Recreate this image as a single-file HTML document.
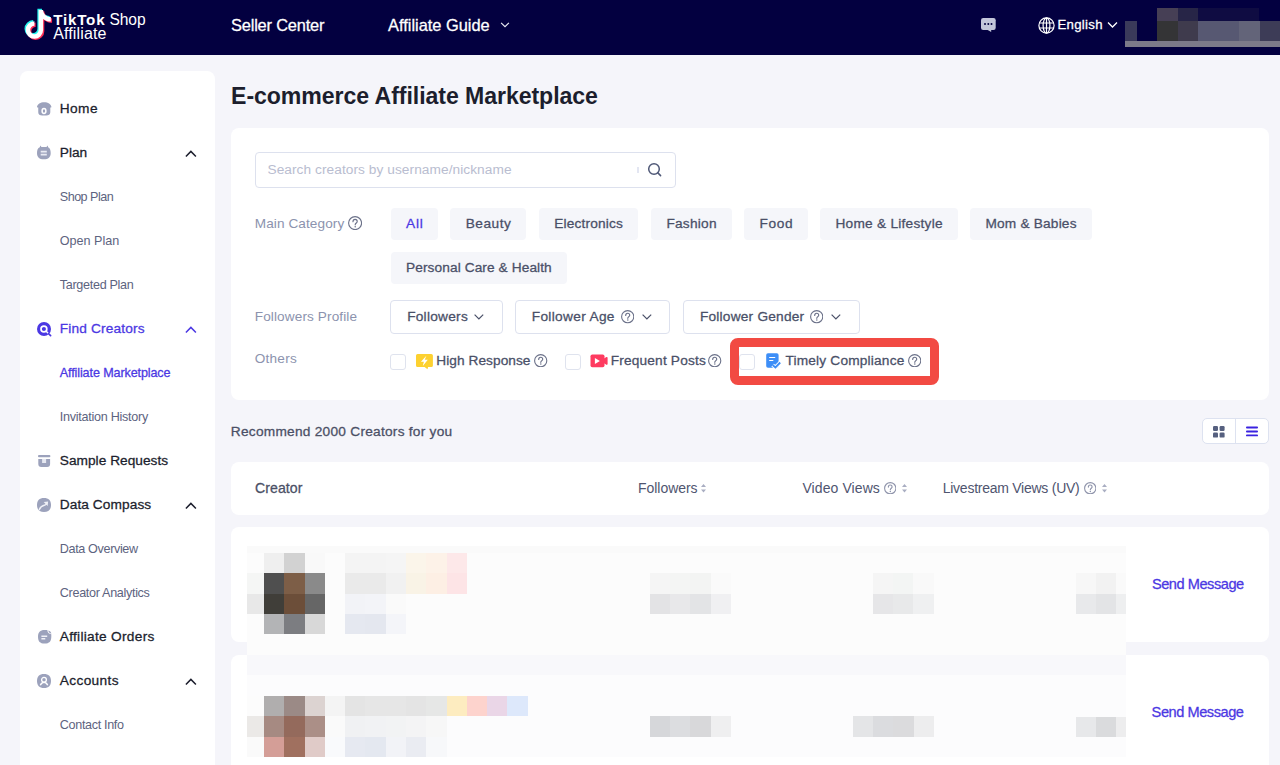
<!DOCTYPE html>
<html><head><meta charset="utf-8">
<style>
*{box-sizing:border-box;margin:0;padding:0}
html,body{width:1280px;height:765px;overflow:hidden;background:#f5f5fa;font-family:"Liberation Sans",sans-serif}
.t{position:absolute;white-space:nowrap;line-height:1}
.a{position:absolute}
.hdr{position:absolute;left:0;top:0;width:1280px;height:55px;background:#030040}
.card{position:absolute;background:#fff;border-radius:8px}
.chip{position:absolute;height:32px;background:#f5f6fa;border-radius:4px}
.dd{position:absolute;height:33px;border:1px solid #dde1ee;border-radius:4px;background:#fff}
.cb{position:absolute;width:16px;height:16px;border:1px solid #dfe3ee;border-radius:3px;background:#fff}
.m{position:absolute}
</style></head><body>
<div class="hdr"></div>
<!-- logo -->
<svg class="a" style="left:22px;top:7px" width="32" height="34" viewBox="0 0 32 34">
<g transform="translate(2.5,1.8) scale(0.645)"><path fill="#25f4ee" d="M20 0H27C27 5.5 32 11 39 11V18C34.5 18 30 16.5 27 14V31A13.5 13.5 0 1 1 13.5 17.5V24.5A6.5 6.5 0 1 0 20 31Z"/></g>
<g transform="translate(4.9,4.2) scale(0.645)"><path fill="#fe2c55" d="M20 0H27C27 5.5 32 11 39 11V18C34.5 18 30 16.5 27 14V31A13.5 13.5 0 1 1 13.5 17.5V24.5A6.5 6.5 0 1 0 20 31Z"/></g>
<g transform="translate(3.7,3.0) scale(0.645)"><path fill="#fff" d="M20 0H27C27 5.5 32 11 39 11V18C34.5 18 30 16.5 27 14V31A13.5 13.5 0 1 1 13.5 17.5V24.5A6.5 6.5 0 1 0 20 31Z"/></g>
</svg>
<!-- header chevron affiliate guide -->
<svg class="a" style="left:500px;top:21px" width="10" height="7" viewBox="0 0 10 7"><path d="M1.1 1.9L5 5.6l3.9-3.7" fill="none" stroke="#e9eaf2" stroke-width="1.2"/></svg>
<!-- chat icon -->
<svg class="a" style="left:981.4px;top:18px" width="15" height="15" viewBox="0 0 15 15"><rect x="0" y="0" width="14.7" height="12" rx="2.2" fill="#c3c6da"/><path fill="#c3c6da" d="M6.2 11.8l4 2.3v-2.3z"/><circle cx="4" cy="6.1" r="1" fill="#030040"/><circle cx="7.3" cy="6.1" r="1" fill="#030040"/><circle cx="10.5" cy="6.1" r="1" fill="#030040"/></svg>
<!-- globe -->
<svg class="a" style="left:1038px;top:16.5px" width="17" height="17" viewBox="0 0 17 17"><g fill="none" stroke="#fff" stroke-width="1.2"><circle cx="8.5" cy="8.5" r="7.6"/><ellipse cx="8.5" cy="8.5" rx="3.4" ry="7.6"/><path d="M8.5 .9v15.2M1 6h15M1 11h15"/></g></svg>
<svg class="a" style="left:1107px;top:21px" width="11" height="8" viewBox="0 0 11 8"><path d="M1 1.5l4.5 4.5 4.5-4.5" fill="none" stroke="#fff" stroke-width="1.3"/></svg>
<!-- header pixelated avatar -->
<div class="m" style="left:1125px;top:41px;width:155px;height:6px;background:#7c7a89"></div>
<div class="m" style="left:1125px;top:20.5px;width:12px;height:20.5px;background:#3a3a5a"></div>
<div class="m" style="left:1157px;top:8px;width:20.5px;height:12.5px;background:#463f55"></div>
<div class="m" style="left:1177.5px;top:8px;width:20.5px;height:12.5px;background:#272547"></div>
<div class="m" style="left:1198px;top:8px;width:61px;height:12.5px;background:#0f0c42"></div>
<div class="m" style="left:1157px;top:20.5px;width:20.5px;height:20.5px;background:#343436"></div>
<div class="m" style="left:1177.5px;top:20.5px;width:20.5px;height:20.5px;background:#3f3b4d"></div>
<div class="m" style="left:1198px;top:20.5px;width:41px;height:20.5px;background:#575872"></div>
<div class="m" style="left:1239px;top:20.5px;width:21px;height:20.5px;background:#636479"></div>
<div class="m" style="left:1260px;top:20.5px;width:20px;height:20.5px;background:#3d3c57"></div>

<!-- sidebar -->
<div class="card" style="left:20px;top:71px;width:195px;height:760px"></div>
<svg class='a' style='left:36.7px;top:102px' width='15' height='14' viewBox='0 0 15 14'><path fill='#9ca2bc' d='M7.2 0.2C11 0.2 14 2.2 14.4 4.8C14.5 5.3 14.1 5.6 13.3 5.6V10.2C13.3 12.4 11.5 13.5 9.3 13.5H5.1C2.9 13.5 1.25 12.4 1.25 10.2V5.6C.4 5.6-.1 5.3 0 4.8C.4 2.2 3.4 .2 7.2 .2Z'/><ellipse cx='7' cy='9' rx='1.9' ry='2.4' fill='none' stroke='#fff' stroke-width='1.5'/></svg>
<svg class='a' style='left:37.2px;top:145.4px' width='14' height='15' viewBox='0 0 14 15'><path fill='#9ca2bc' d='M3.2 0.4l1.3 1.6h4.9L10.7.4l.4 1.9C12.9 3.2 13.7 5 13.7 8c0 4.2-2.3 6.3-6.85 6.3S0 12.2 0 8C0 5 .8 3.2 2.8 2.3z'/><path fill='#e9ebf4' d='M3.7 5.7h6.1v1.8H3.7zM3.7 8.7h6.1v1.8H3.7z'/></svg>
<svg class='a' style='left:37px;top:321.8px' width='15' height='15' viewBox='0 0 15 15'><circle cx='7' cy='7' r='7' fill='#4b38e3'/><circle cx='6.9' cy='7' r='2.9' fill='none' stroke='#fff' stroke-width='1.7'/><path d='M9.2 9.3l2.4 2.4' stroke='#fff' stroke-width='1.5'/><path d='M11.4 11.5l2.2 2.2' stroke='#4b38e3' stroke-width='1.7' stroke-linecap='round'/></svg>
<svg class='a' style='left:37.8px;top:455px' width='13' height='12' viewBox='0 0 13 12'><rect x='0' y='0' width='12.4' height='2.3' rx='1' fill='#9ca2bc'/><path fill='#9ca2bc' d='M0.3 3.9h11.8V9a3 3 0 0 1-3 3h-5.8a3 3 0 0 1-3-3z'/><rect x='4.1' y='3.9' width='4' height='4.1' fill='#e6e8f1'/></svg>
<svg class='a' style='left:37px;top:498px' width='14' height='14' viewBox='0 0 14 14'><path fill='#9ca2bc' d='M7 0c4.6 0 7 2.4 7 7s-2.4 7-7 7-7-2.4-7-7 2.4-7 7-7z'/><path d='M2.4 11.5C3.3 8.9 5 7.7 7.3 7.2 8.3 7 9 6.5 9.7 5.6' fill='none' stroke='#f0f1f7' stroke-width='1.5' stroke-linecap='round'/><path fill='#f0f1f7' d='M6.7 4.1l4.4-.6-.5 4.4z'/></svg>
<svg class='a' style='left:37.5px;top:630px' width='14' height='14' viewBox='0 0 14 14'><path fill='#9ca2bc' d='M6.6 0H9.3C9.5 2.4 10.9 3.9 13.3 4.2V6.8C13.3 11.4 11.3 13.6 6.65 13.6S0 11.4 0 6.8 2 0 6.6 0z'/><path fill='#9ca2bc' d='M10.3 .6C12 1 12.9 2 13.4 3.6 11.5 3.4 10.5 2.4 10.3 .6z'/><path fill='#f0f1f7' d='M3.4 5.6h5.8v1.3H3.4zM3.4 8.1h3.9v1.5H3.4z'/></svg>
<svg class='a' style='left:36.8px;top:673.8px' width='14' height='14' viewBox='0 0 14 14'><path fill='#9ca2bc' d='M7 0c4.6 0 7 2.4 7 7s-2.4 7-7 7-7-2.4-7-7 2.4-7 7-7z'/><circle cx='7' cy='5.8' r='2.4' fill='none' stroke='#fff' stroke-width='1.3'/><path d='M3.3 11.3c.8-1.9 2.1-2.9 3.7-2.9s2.9 1 3.7 2.9' fill='none' stroke='#fff' stroke-width='1.3'/></svg>
<svg class='a' style='left:185px;top:150.2px' width='12' height='7.5' viewBox='0 0 12 7.5'><path d='M.9 6.5L5.9 1.4l5 5.1' fill='none' stroke='#1c1e2d' stroke-width='1.5'/></svg>
<svg class='a' style='left:185px;top:326.3px' width='12' height='7.5' viewBox='0 0 12 7.5'><path d='M.9 6.5L5.9 1.4l5 5.1' fill='none' stroke='#4b38e3' stroke-width='1.5'/></svg>
<svg class='a' style='left:185px;top:502.3px' width='12' height='7.5' viewBox='0 0 12 7.5'><path d='M.9 6.5L5.9 1.4l5 5.1' fill='none' stroke='#1c1e2d' stroke-width='1.5'/></svg>
<svg class='a' style='left:185px;top:678.3px' width='12' height='7.5' viewBox='0 0 12 7.5'><path d='M.9 6.5L5.9 1.4l5 5.1' fill='none' stroke='#1c1e2d' stroke-width='1.5'/></svg>

<!-- filter card -->
<div class="card" style="left:231px;top:128px;width:1038px;height:272px"></div>
<div class="a" style="left:255px;top:152px;width:420.8px;height:35.8px;border:1.2px solid #dde1ee;border-radius:4px"></div>
<div class="a" style="left:637.2px;top:167px;width:1.8px;height:6px;background:#e3e6f2"></div>
<svg class="a" style="left:646px;top:161px" width="17" height="17" viewBox="0 0 17 17"><g fill="none" stroke="#4f5877" stroke-width="1.5" stroke-linecap="round"><circle cx="8" cy="8" r="5.3"/><path d="M11.9 11.9l2.7 2.7"/></g></svg>
<div class="chip" style="left:390.6px;top:208px;width:47.6px"></div>
<div class="chip" style="left:450.2px;top:208px;width:76.1px"></div>
<div class="chip" style="left:538.7px;top:208px;width:99.7px"></div>
<div class="chip" style="left:651px;top:208px;width:81px"></div>
<div class="chip" style="left:744px;top:208px;width:64px"></div>
<div class="chip" style="left:820px;top:208px;width:138px"></div>
<div class="chip" style="left:970px;top:208px;width:122px"></div>
<div class="chip" style="left:390.6px;top:252px;width:176.6px"></div>
<div class="dd" style="left:390.2px;top:300px;width:112.4px;height:33.6px"></div>
<div class="dd" style="left:515.2px;top:300px;width:155.2px;height:33.6px"></div>
<div class="dd" style="left:682.5px;top:300px;width:177.2px;height:33.6px"></div>
<svg class='a' style='left:474px;top:314.3px' width='10' height='6' viewBox='0 0 10 6'><path d='M.6 .7L4.9 5 9.2 .7' fill='none' stroke='#4a5068' stroke-width='1.2'/></svg>
<svg class='a' style='left:641.8px;top:314.3px' width='10' height='6' viewBox='0 0 10 6'><path d='M.6 .7L4.9 5 9.2 .7' fill='none' stroke='#4a5068' stroke-width='1.2'/></svg>
<svg class='a' style='left:830.8px;top:314.3px' width='10' height='6' viewBox='0 0 10 6'><path d='M.6 .7L4.9 5 9.2 .7' fill='none' stroke='#4a5068' stroke-width='1.2'/></svg>
<div class="cb" style="left:390.2px;top:354px"></div>
<div class="cb" style="left:565px;top:354px"></div>
<div class="cb" style="left:739px;top:354px"></div>
<!-- lightning icon -->
<svg class="a" style="left:415.9px;top:354.1px" width="17" height="16" viewBox="0 0 17 16"><path fill="#fdd130" d="M1.6 0h13.7a1.6 1.6 0 0 1 1.6 1.6v9.8a1.6 1.6 0 0 1-1.6 1.6H12.1l-.6 2.2-2.9-2.2H1.6A1.6 1.6 0 0 1 0 11.4V1.6A1.6 1.6 0 0 1 1.6 0z"/><path fill="#fff" d="M10.4 1.7L4.9 7.8h3L6.8 12l5-6.2H8.7z"/></svg>
<!-- video icon -->
<svg class="a" style="left:590px;top:354px" width="18" height="14" viewBox="0 0 18 14"><rect x="0.5" y="0.5" width="14" height="12.7" rx="1.8" fill="#fe3b60"/><path fill="#fe3b60" d="M14 4.4l2.4-1.3c.6-.3 1.2.1 1.2.7v6.3c0 .6-.6 1-1.2.7L14 9.3z"/><path fill="#fff" d="M4.9 4v6.1l5-3.05z"/></svg>
<!-- doc icon -->
<svg class="a" style="left:765.6px;top:353px" width="16" height="16" viewBox="0 0 16 16"><rect x="0.2" y="0.2" width="12.4" height="14.5" rx="1.8" fill="#3d8ef7"/><path fill="#fff" d="M3.2 3.9h6v1.2h-6zM3.2 6.9h4.1v1.2H3.2z"/><path d="M6.6 12.1l2.8 2.3 4.8-4.9" fill="none" stroke="#fff" stroke-width="3.8" stroke-linejoin="round"/><path d="M6.6 12.1l2.8 2.3 4.8-4.9" fill="none" stroke="#3d8ef7" stroke-width="1.9"/></svg>
<svg class='a' style='left:347.5px;top:216.2px' width='14.2' height='14.2' viewBox='0 0 14.2 14.2'><circle cx='7.1' cy='7.1' r='6.5' fill='none' stroke='#6b7189' stroke-width='1.1'/><g transform='scale(1.0143)'><path d='M4.9 5.7C4.9 4.4 5.8 3.4 7 3.4S9.1 4.3 9.1 5.5C9.1 6.9 7.1 7 7.1 8.7' fill='none' stroke='#6b7189' stroke-width='1.134' stroke-linecap='round'/><circle cx='7.1' cy='10.5' r='0.739' fill='#6b7189'/></g></svg>
<svg class='a' style='left:620.7px;top:310.2px' width='13.4' height='13.4' viewBox='0 0 13.4 13.4'><circle cx='6.7' cy='6.7' r='6.1000000000000005' fill='none' stroke='#6b7189' stroke-width='1.1'/><g transform='scale(0.9571)'><path d='M4.9 5.7C4.9 4.4 5.8 3.4 7 3.4S9.1 4.3 9.1 5.5C9.1 6.9 7.1 7 7.1 8.7' fill='none' stroke='#6b7189' stroke-width='1.201' stroke-linecap='round'/><circle cx='7.1' cy='10.5' r='0.784' fill='#6b7189'/></g></svg>
<svg class='a' style='left:809.8px;top:310.2px' width='13.4' height='13.4' viewBox='0 0 13.4 13.4'><circle cx='6.7' cy='6.7' r='6.1000000000000005' fill='none' stroke='#6b7189' stroke-width='1.1'/><g transform='scale(0.9571)'><path d='M4.9 5.7C4.9 4.4 5.8 3.4 7 3.4S9.1 4.3 9.1 5.5C9.1 6.9 7.1 7 7.1 8.7' fill='none' stroke='#6b7189' stroke-width='1.201' stroke-linecap='round'/><circle cx='7.1' cy='10.5' r='0.784' fill='#6b7189'/></g></svg>
<svg class='a' style='left:534.4px;top:353.5px' width='13.4' height='13.4' viewBox='0 0 13.4 13.4'><circle cx='6.7' cy='6.7' r='6.1000000000000005' fill='none' stroke='#6b7189' stroke-width='1.1'/><g transform='scale(0.9571)'><path d='M4.9 5.7C4.9 4.4 5.8 3.4 7 3.4S9.1 4.3 9.1 5.5C9.1 6.9 7.1 7 7.1 8.7' fill='none' stroke='#6b7189' stroke-width='1.201' stroke-linecap='round'/><circle cx='7.1' cy='10.5' r='0.784' fill='#6b7189'/></g></svg>
<svg class='a' style='left:708.2px;top:353.5px' width='13.4' height='13.4' viewBox='0 0 13.4 13.4'><circle cx='6.7' cy='6.7' r='6.1000000000000005' fill='none' stroke='#6b7189' stroke-width='1.1'/><g transform='scale(0.9571)'><path d='M4.9 5.7C4.9 4.4 5.8 3.4 7 3.4S9.1 4.3 9.1 5.5C9.1 6.9 7.1 7 7.1 8.7' fill='none' stroke='#6b7189' stroke-width='1.201' stroke-linecap='round'/><circle cx='7.1' cy='10.5' r='0.784' fill='#6b7189'/></g></svg>
<svg class='a' style='left:908px;top:353.5px' width='13.4' height='13.4' viewBox='0 0 13.4 13.4'><circle cx='6.7' cy='6.7' r='6.1000000000000005' fill='none' stroke='#6b7189' stroke-width='1.1'/><g transform='scale(0.9571)'><path d='M4.9 5.7C4.9 4.4 5.8 3.4 7 3.4S9.1 4.3 9.1 5.5C9.1 6.9 7.1 7 7.1 8.7' fill='none' stroke='#6b7189' stroke-width='1.201' stroke-linecap='round'/><circle cx='7.1' cy='10.5' r='0.784' fill='#6b7189'/></g></svg>
<!-- red highlight box -->
<div class="a" style="left:729.8px;top:338.4px;width:209.7px;height:46.4px;border-style:solid;border-color:#f24a43;border-width:9.8px 9.3px;border-radius:8px"></div>

<!-- view toggle -->
<div class="a" style="left:1202.2px;top:418.4px;width:66.5px;height:26px;border:1.2px solid #dde2f0;border-radius:5px;background:#fff"></div>
<div class="a" style="left:1235.2px;top:418.4px;width:1.2px;height:26px;background:#dde2f0"></div>
<svg class="a" style="left:1213.2px;top:425.6px" width="12" height="12" viewBox="0 0 12 12"><g fill="#56607f"><rect x="0" y="0" width="5" height="5" rx="1.2"/><rect x="6.6" y="0" width="5" height="5" rx="1.2"/><rect x="0" y="6.6" width="5" height="5" rx="1.2"/><rect x="6.6" y="6.6" width="5" height="5" rx="1.2"/></g></svg>
<svg class="a" style="left:1246px;top:426px" width="12" height="11" viewBox="0 0 12 11"><g fill="#3a22e0"><rect x="0" y="0.6" width="12" height="1.9" rx=".9"/><rect x="0" y="4.5" width="12" height="1.9" rx=".9"/><rect x="0" y="8.4" width="12" height="1.9" rx=".9"/></g></svg>

<!-- table header card -->
<div class="card" style="left:231px;top:462px;width:1038px;height:52.5px"></div>
<svg class='a' style='left:701px;top:484.4px' width='5' height='8.5' viewBox='0 0 5 8.5'><path fill='#a9aec2' d='M2.5 0L5 3H0zM2.5 8.5L5 5.5H0z'/></svg>
<svg class='a' style='left:901.5px;top:484.4px' width='5' height='8.5' viewBox='0 0 5 8.5'><path fill='#a9aec2' d='M2.5 0L5 3H0zM2.5 8.5L5 5.5H0z'/></svg>
<svg class='a' style='left:1102px;top:484.4px' width='5' height='8.5' viewBox='0 0 5 8.5'><path fill='#a9aec2' d='M2.5 0L5 3H0zM2.5 8.5L5 5.5H0z'/></svg>
<svg class='a' style='left:883.8px;top:481.5px' width='12.5' height='12.5' viewBox='0 0 12.5 12.5'><circle cx='6.25' cy='6.25' r='5.65' fill='none' stroke='#8f94ab' stroke-width='1.1'/><g transform='scale(0.8929)'><path d='M4.9 5.7C4.9 4.4 5.8 3.4 7 3.4S9.1 4.3 9.1 5.5C9.1 6.9 7.1 7 7.1 8.7' fill='none' stroke='#8f94ab' stroke-width='1.288' stroke-linecap='round'/><circle cx='7.1' cy='10.5' r='0.840' fill='#8f94ab'/></g></svg>
<svg class='a' style='left:1083.7px;top:481.5px' width='12.5' height='12.5' viewBox='0 0 12.5 12.5'><circle cx='6.25' cy='6.25' r='5.65' fill='none' stroke='#8f94ab' stroke-width='1.1'/><g transform='scale(0.8929)'><path d='M4.9 5.7C4.9 4.4 5.8 3.4 7 3.4S9.1 4.3 9.1 5.5C9.1 6.9 7.1 7 7.1 8.7' fill='none' stroke='#8f94ab' stroke-width='1.288' stroke-linecap='round'/><circle cx='7.1' cy='10.5' r='0.840' fill='#8f94ab'/></g></svg>
<!-- row cards -->
<div class="card" style="left:231px;top:527px;width:1038px;height:115px"></div>
<div class="card" style="left:231px;top:655px;width:1038px;height:130px"></div>
<div class='m' style='left:247.00px;top:546.00px;width:879.00px;height:211.00px;background:#fcfcfc'></div>
<div class='m' style='left:247.00px;top:546.00px;width:879.00px;height:6.75px;background:#fafafa'></div>
<div class='m' style='left:247.00px;top:654.70px;width:879.00px;height:20.30px;background:#f8f8fb'></div>
<div class='m' style='left:247.00px;top:675.00px;width:879.00px;height:82.00px;background:#fcfcfd'></div>
<div class='m' style='left:247.00px;top:552.75px;width:17.00px;height:20.45px;background:#fcfcfc'></div>
<div class='m' style='left:264.00px;top:552.75px;width:20.25px;height:20.45px;background:#efefef'></div>
<div class='m' style='left:284.25px;top:552.75px;width:20.25px;height:20.45px;background:#d2d2d2'></div>
<div class='m' style='left:304.50px;top:552.75px;width:20.25px;height:20.45px;background:#f9f9f9'></div>
<div class='m' style='left:345.00px;top:552.75px;width:20.25px;height:20.45px;background:#f4f4f4'></div>
<div class='m' style='left:365.25px;top:552.75px;width:20.25px;height:20.45px;background:#f4f4f4'></div>
<div class='m' style='left:385.50px;top:552.75px;width:20.25px;height:20.45px;background:#f5f5f5'></div>
<div class='m' style='left:405.75px;top:552.75px;width:20.25px;height:20.45px;background:#fbf5ea'></div>
<div class='m' style='left:426.00px;top:552.75px;width:20.50px;height:20.45px;background:#fdf2e8'></div>
<div class='m' style='left:446.50px;top:552.75px;width:20.25px;height:20.45px;background:#fde8e9'></div>
<div class='m' style='left:247.00px;top:573.20px;width:17.00px;height:20.40px;background:#f5f6f5'></div>
<div class='m' style='left:264.00px;top:573.20px;width:20.25px;height:20.40px;background:#4f4f4f'></div>
<div class='m' style='left:284.25px;top:573.20px;width:20.25px;height:20.40px;background:#7d5e47'></div>
<div class='m' style='left:304.50px;top:573.20px;width:20.25px;height:20.40px;background:#8a8a8a'></div>
<div class='m' style='left:345.00px;top:573.20px;width:20.25px;height:20.40px;background:#eaeaea'></div>
<div class='m' style='left:365.25px;top:573.20px;width:20.25px;height:20.40px;background:#eaeaea'></div>
<div class='m' style='left:385.50px;top:573.20px;width:20.25px;height:20.40px;background:#f1f1f1'></div>
<div class='m' style='left:405.75px;top:573.20px;width:20.25px;height:20.40px;background:#f9f3e6'></div>
<div class='m' style='left:426.00px;top:573.20px;width:20.50px;height:20.40px;background:#fdefe4'></div>
<div class='m' style='left:446.50px;top:573.20px;width:20.25px;height:20.40px;background:#fde4e6'></div>
<div class='m' style='left:247.00px;top:593.60px;width:17.00px;height:20.40px;background:#e8e8e8'></div>
<div class='m' style='left:264.00px;top:593.60px;width:20.25px;height:20.40px;background:#403e39'></div>
<div class='m' style='left:284.25px;top:593.60px;width:20.25px;height:20.40px;background:#6c4e39'></div>
<div class='m' style='left:304.50px;top:593.60px;width:20.25px;height:20.40px;background:#666666'></div>
<div class='m' style='left:345.00px;top:593.60px;width:20.25px;height:20.40px;background:#f2f3f7'></div>
<div class='m' style='left:365.25px;top:593.60px;width:20.25px;height:20.40px;background:#f3f4f8'></div>
<div class='m' style='left:385.50px;top:593.60px;width:20.25px;height:20.40px;background:#fafafa'></div>
<div class='m' style='left:247.00px;top:614.00px;width:17.00px;height:20.30px;background:#fcfcfc'></div>
<div class='m' style='left:264.00px;top:614.00px;width:20.25px;height:20.30px;background:#b3b4b6'></div>
<div class='m' style='left:284.25px;top:614.00px;width:20.25px;height:20.30px;background:#7c7d81'></div>
<div class='m' style='left:304.50px;top:614.00px;width:20.25px;height:20.30px;background:#d8d8d8'></div>
<div class='m' style='left:345.00px;top:614.00px;width:20.25px;height:20.30px;background:#e5e8f0'></div>
<div class='m' style='left:365.25px;top:614.00px;width:20.25px;height:20.30px;background:#e4e7ef'></div>
<div class='m' style='left:385.50px;top:614.00px;width:20.25px;height:20.30px;background:#f4f5f9'></div>
<div class='m' style='left:247.00px;top:695.75px;width:17.00px;height:20.50px;background:#fcfcfc'></div>
<div class='m' style='left:264.00px;top:695.75px;width:20.25px;height:20.50px;background:#b0aeae'></div>
<div class='m' style='left:284.25px;top:695.75px;width:20.25px;height:20.50px;background:#9b8a86'></div>
<div class='m' style='left:304.50px;top:695.75px;width:20.25px;height:20.50px;background:#dcd3d1'></div>
<div class='m' style='left:324.75px;top:695.75px;width:20.25px;height:20.50px;background:#f4f4f4'></div>
<div class='m' style='left:345.00px;top:695.75px;width:20.25px;height:20.50px;background:#e4e4e4'></div>
<div class='m' style='left:365.25px;top:695.75px;width:20.25px;height:20.50px;background:#e6e6e6'></div>
<div class='m' style='left:385.50px;top:695.75px;width:20.25px;height:20.50px;background:#e6e6e6'></div>
<div class='m' style='left:405.75px;top:695.75px;width:20.25px;height:20.50px;background:#e4e4e4'></div>
<div class='m' style='left:426.00px;top:695.75px;width:20.50px;height:20.50px;background:#e6e7e6'></div>
<div class='m' style='left:446.50px;top:695.75px;width:20.25px;height:20.50px;background:#fdecc0'></div>
<div class='m' style='left:466.75px;top:695.75px;width:20.25px;height:20.50px;background:#fdd3cd'></div>
<div class='m' style='left:487.00px;top:695.75px;width:20.25px;height:20.50px;background:#ead6e7'></div>
<div class='m' style='left:507.25px;top:695.75px;width:20.25px;height:20.50px;background:#dde8fb'></div>
<div class='m' style='left:247.00px;top:716.25px;width:17.00px;height:20.25px;background:#ebe9e7'></div>
<div class='m' style='left:264.00px;top:716.25px;width:20.25px;height:20.25px;background:#a68a82'></div>
<div class='m' style='left:284.25px;top:716.25px;width:20.25px;height:20.25px;background:#946a5c'></div>
<div class='m' style='left:304.50px;top:716.25px;width:20.25px;height:20.25px;background:#ab8f87'></div>
<div class='m' style='left:324.75px;top:716.25px;width:20.25px;height:20.25px;background:#fafafa'></div>
<div class='m' style='left:345.00px;top:716.25px;width:20.25px;height:20.25px;background:#f0f1f3'></div>
<div class='m' style='left:365.25px;top:716.25px;width:20.25px;height:20.25px;background:#f1f2f4'></div>
<div class='m' style='left:385.50px;top:716.25px;width:20.25px;height:20.25px;background:#f2f3f4'></div>
<div class='m' style='left:405.75px;top:716.25px;width:20.25px;height:20.25px;background:#f4f4f5'></div>
<div class='m' style='left:426.00px;top:716.25px;width:20.50px;height:20.25px;background:#f7f7f7'></div>
<div class='m' style='left:247.00px;top:736.50px;width:17.00px;height:20.25px;background:#fafafa'></div>
<div class='m' style='left:264.00px;top:736.50px;width:20.25px;height:20.25px;background:#d49e97'></div>
<div class='m' style='left:284.25px;top:736.50px;width:20.25px;height:20.25px;background:#a0705f'></div>
<div class='m' style='left:304.50px;top:736.50px;width:20.25px;height:20.25px;background:#e0cbc8'></div>
<div class='m' style='left:324.75px;top:736.50px;width:20.25px;height:20.25px;background:#f9fafc'></div>
<div class='m' style='left:345.00px;top:736.50px;width:20.25px;height:20.25px;background:#e6e9f1'></div>
<div class='m' style='left:365.25px;top:736.50px;width:20.25px;height:20.25px;background:#e4e8f0'></div>
<div class='m' style='left:385.50px;top:736.50px;width:20.25px;height:20.25px;background:#f2f3f7'></div>
<div class='m' style='left:405.75px;top:736.50px;width:20.25px;height:20.25px;background:#eaecf2'></div>
<div class='m' style='left:426.00px;top:736.50px;width:20.50px;height:20.25px;background:#f7f8fa'></div>
<div class='m' style='left:649.50px;top:573.00px;width:20.50px;height:20.50px;background:#f5f5f5'></div>
<div class='m' style='left:670.00px;top:573.00px;width:20.00px;height:20.50px;background:#f4f5f4'></div>
<div class='m' style='left:690.00px;top:573.00px;width:20.50px;height:20.50px;background:#f3f4f3'></div>
<div class='m' style='left:710.50px;top:573.00px;width:20.25px;height:20.50px;background:#fafafa'></div>
<div class='m' style='left:649.50px;top:593.50px;width:20.50px;height:20.50px;background:#e3e3e5'></div>
<div class='m' style='left:670.00px;top:593.50px;width:20.00px;height:20.50px;background:#e8e8ea'></div>
<div class='m' style='left:690.00px;top:593.50px;width:20.50px;height:20.50px;background:#e3e4e6'></div>
<div class='m' style='left:710.50px;top:593.50px;width:20.25px;height:20.50px;background:#f0f0f2'></div>
<div class='m' style='left:873.00px;top:573.00px;width:20.00px;height:20.50px;background:#f5f5f5'></div>
<div class='m' style='left:893.00px;top:573.00px;width:20.25px;height:20.50px;background:#f3f5f4'></div>
<div class='m' style='left:913.25px;top:573.00px;width:20.50px;height:20.50px;background:#f9f9f9'></div>
<div class='m' style='left:873.00px;top:593.50px;width:20.00px;height:20.50px;background:#e6e6e8'></div>
<div class='m' style='left:893.00px;top:593.50px;width:20.25px;height:20.50px;background:#e8e9ea'></div>
<div class='m' style='left:913.25px;top:593.50px;width:20.50px;height:20.50px;background:#eff0f1'></div>
<div class='m' style='left:1076.00px;top:573.00px;width:20.20px;height:20.50px;background:#f7f7f7'></div>
<div class='m' style='left:1096.20px;top:573.00px;width:19.80px;height:20.50px;background:#f2f2f2'></div>
<div class='m' style='left:1116.00px;top:573.00px;width:10.00px;height:20.50px;background:#fafafa'></div>
<div class='m' style='left:1076.00px;top:593.50px;width:20.20px;height:20.50px;background:#e8e9eb'></div>
<div class='m' style='left:1096.20px;top:593.50px;width:19.80px;height:20.50px;background:#e3e4e6'></div>
<div class='m' style='left:1116.00px;top:593.50px;width:10.00px;height:20.50px;background:#eeeff0'></div>
<div class='m' style='left:649.50px;top:716.25px;width:20.00px;height:20.50px;background:#d6d7da'></div>
<div class='m' style='left:669.50px;top:716.25px;width:20.50px;height:20.50px;background:#dcdde0'></div>
<div class='m' style='left:690.00px;top:716.25px;width:20.50px;height:20.50px;background:#d8d8da'></div>
<div class='m' style='left:710.50px;top:716.25px;width:20.25px;height:20.50px;background:#efeff0'></div>
<div class='m' style='left:852.50px;top:716.25px;width:20.50px;height:20.50px;background:#e4e5e7'></div>
<div class='m' style='left:873.00px;top:716.25px;width:20.00px;height:20.50px;background:#dbdcdf'></div>
<div class='m' style='left:893.00px;top:716.25px;width:20.50px;height:20.50px;background:#dbdbdd'></div>
<div class='m' style='left:913.50px;top:716.25px;width:20.25px;height:20.50px;background:#ededee'></div>
<div class='m' style='left:1076.00px;top:716.50px;width:20.00px;height:20.40px;background:#e7e8ea'></div>
<div class='m' style='left:1096.00px;top:716.50px;width:20.30px;height:20.40px;background:#dadbdd'></div>
<div class='m' style='left:1116.30px;top:716.50px;width:9.70px;height:20.40px;background:#ededee'></div>
<div class='t' style='left:53.19px;top:12.38px;font-size:15.2px;font-weight:700;color:#fff;letter-spacing:0.774px'>TikTok</div>
<div class='t' style='left:109.38px;top:12.04px;font-size:15.6px;font-weight:400;color:#fff;letter-spacing:-0.058px'>Shop</div>
<div class='t' style='left:53.16px;top:25.91px;font-size:16px;font-weight:400;color:#fff;letter-spacing:0.137px'>Affiliate</div>
<div class='t' style='left:231.04px;top:16.58px;font-size:16.4px;font-weight:400;-webkit-text-stroke:0.28px #fff;color:#fff;letter-spacing:-0.187px'>Seller Center</div>
<div class='t' style='left:388.04px;top:16.58px;font-size:16.4px;font-weight:400;-webkit-text-stroke:0.28px #fff;color:#fff;letter-spacing:-0.010px'>Affiliate Guide</div>
<div class='t' style='left:1057.47px;top:18.24px;font-size:13.2px;font-weight:400;-webkit-text-stroke:0.28px #fff;color:#fff;letter-spacing:0.298px'>English</div>
<div class='t' style='left:59.75px;top:102.02px;font-size:13.7px;font-weight:400;-webkit-text-stroke:0.28px #1c1e2d;color:#1c1e2d;letter-spacing:0.427px'>Home</div>
<div class='t' style='left:59.75px;top:146.02px;font-size:13.7px;font-weight:400;-webkit-text-stroke:0.28px #1c1e2d;color:#1c1e2d;letter-spacing:0.000px'>Plan</div>
<div class='t' style='left:59.80px;top:190.64px;font-size:12.6px;font-weight:400;color:#5d6380;letter-spacing:-0.527px'>Shop Plan</div>
<div class='t' style='left:59.80px;top:234.64px;font-size:12.6px;font-weight:400;color:#5d6380;letter-spacing:0.000px'>Open Plan</div>
<div class='t' style='left:59.80px;top:278.64px;font-size:12.6px;font-weight:400;color:#5d6380;letter-spacing:-0.309px'>Targeted Plan</div>
<div class='t' style='left:59.75px;top:322.22px;font-size:13.7px;font-weight:400;-webkit-text-stroke:0.28px #4b38e3;color:#4b38e3;letter-spacing:0.156px'>Find Creators</div>
<div class='t' style='left:59.80px;top:366.94px;font-size:12.6px;font-weight:400;-webkit-text-stroke:0.28px #4b38e3;color:#4b38e3;letter-spacing:-0.123px'>Affiliate Marketplace</div>
<div class='t' style='left:59.80px;top:410.94px;font-size:12.6px;font-weight:400;color:#5d6380;letter-spacing:-0.276px'>Invitation History</div>
<div class='t' style='left:59.75px;top:454.02px;font-size:13.7px;font-weight:400;-webkit-text-stroke:0.28px #1c1e2d;color:#1c1e2d;letter-spacing:0.025px'>Sample Requests</div>
<div class='t' style='left:59.75px;top:498.02px;font-size:13.7px;font-weight:400;-webkit-text-stroke:0.28px #1c1e2d;color:#1c1e2d;letter-spacing:0.079px'>Data Compass</div>
<div class='t' style='left:59.80px;top:543.14px;font-size:12.6px;font-weight:400;color:#5d6380;letter-spacing:-0.357px'>Data Overview</div>
<div class='t' style='left:59.80px;top:586.94px;font-size:12.6px;font-weight:400;color:#5d6380;letter-spacing:-0.318px'>Creator Analytics</div>
<div class='t' style='left:59.75px;top:630.02px;font-size:13.7px;font-weight:400;-webkit-text-stroke:0.28px #1c1e2d;color:#1c1e2d;letter-spacing:0.288px'>Affiliate Orders</div>
<div class='t' style='left:59.75px;top:674.02px;font-size:13.7px;font-weight:400;-webkit-text-stroke:0.28px #1c1e2d;color:#1c1e2d;letter-spacing:0.355px'>Accounts</div>
<div class='t' style='left:59.80px;top:718.74px;font-size:12.6px;font-weight:400;color:#5d6380;letter-spacing:-0.338px'>Contact Info</div>
<div class='t' style='left:231.08px;top:85.42px;font-size:23.1px;font-weight:700;color:#1c1e2d;letter-spacing:-0.063px'>E-commerce Affiliate Marketplace</div>
<div class='t' style='left:267.45px;top:163.02px;font-size:13.7px;font-weight:400;color:#b9bdd0;letter-spacing:0.062px'>Search creators by username/nickname</div>
<div class='t' style='left:254.76px;top:217.01px;font-size:13.6px;font-weight:400;color:#8c93ae;letter-spacing:0.090px'>Main Category</div>
<div class='t' style='left:406.05px;top:217.02px;font-size:13.7px;font-weight:400;-webkit-text-stroke:0.28px #4b38e3;color:#4b38e3;letter-spacing:0.739px'>All</div>
<div class='t' style='left:465.65px;top:217.02px;font-size:13.7px;font-weight:400;-webkit-text-stroke:0.28px #4a5068;color:#4a5068;letter-spacing:0.514px'>Beauty</div>
<div class='t' style='left:554.15px;top:217.02px;font-size:13.7px;font-weight:400;-webkit-text-stroke:0.28px #4a5068;color:#4a5068;letter-spacing:0.184px'>Electronics</div>
<div class='t' style='left:666.45px;top:217.02px;font-size:13.7px;font-weight:400;-webkit-text-stroke:0.28px #4a5068;color:#4a5068;letter-spacing:0.232px'>Fashion</div>
<div class='t' style='left:759.45px;top:217.02px;font-size:13.7px;font-weight:400;-webkit-text-stroke:0.28px #4a5068;color:#4a5068;letter-spacing:0.631px'>Food</div>
<div class='t' style='left:835.45px;top:217.02px;font-size:13.7px;font-weight:400;-webkit-text-stroke:0.28px #4a5068;color:#4a5068;letter-spacing:0.242px'>Home &amp; Lifestyle</div>
<div class='t' style='left:985.45px;top:217.02px;font-size:13.7px;font-weight:400;-webkit-text-stroke:0.28px #4a5068;color:#4a5068;letter-spacing:0.189px'>Mom &amp; Babies</div>
<div class='t' style='left:406.05px;top:261.02px;font-size:13.7px;font-weight:400;-webkit-text-stroke:0.28px #4a5068;color:#4a5068;letter-spacing:0.090px'>Personal Care &amp; Health</div>
<div class='t' style='left:254.76px;top:310.11px;font-size:13.6px;font-weight:400;color:#8c93ae;letter-spacing:0.113px'>Followers Profile</div>
<div class='t' style='left:407.15px;top:310.22px;font-size:13.7px;font-weight:400;-webkit-text-stroke:0.28px #4a5068;color:#4a5068;letter-spacing:0.252px'>Followers</div>
<div class='t' style='left:531.75px;top:310.22px;font-size:13.7px;font-weight:400;-webkit-text-stroke:0.28px #4a5068;color:#4a5068;letter-spacing:0.325px'>Follower Age</div>
<div class='t' style='left:699.95px;top:310.22px;font-size:13.7px;font-weight:400;-webkit-text-stroke:0.28px #4a5068;color:#4a5068;letter-spacing:0.215px'>Follower Gender</div>
<div class='t' style='left:254.76px;top:352.41px;font-size:13.6px;font-weight:400;color:#8c93ae;letter-spacing:0.238px'>Others</div>
<div class='t' style='left:436.35px;top:354.12px;font-size:13.7px;font-weight:400;-webkit-text-stroke:0.28px #4a5068;color:#4a5068;letter-spacing:0.042px'>High Response</div>
<div class='t' style='left:610.65px;top:354.12px;font-size:13.7px;font-weight:400;-webkit-text-stroke:0.28px #4a5068;color:#4a5068;letter-spacing:0.182px'>Frequent Posts</div>
<div class='t' style='left:785.45px;top:354.12px;font-size:13.7px;font-weight:400;-webkit-text-stroke:0.28px #4a5068;color:#4a5068;letter-spacing:0.186px'>Timely Compliance</div>
<div class='t' style='left:230.85px;top:424.72px;font-size:13.7px;font-weight:400;-webkit-text-stroke:0.28px #4b5066;color:#4b5066;letter-spacing:0.250px'>Recommend 2000 Creators for you</div>
<div class='t' style='left:255.04px;top:481.29px;font-size:14.1px;font-weight:400;-webkit-text-stroke:0.28px #4b5066;color:#4b5066;letter-spacing:0.055px'>Creator</div>
<div class='t' style='left:638.04px;top:481.17px;font-size:14px;font-weight:400;color:#4f5570;letter-spacing:-0.048px'>Followers</div>
<div class='t' style='left:802.44px;top:481.17px;font-size:14px;font-weight:400;color:#4f5570;letter-spacing:0.087px'>Video Views</div>
<div class='t' style='left:942.74px;top:481.17px;font-size:14px;font-weight:400;color:#4f5570;letter-spacing:-0.255px'>Livestream Views (UV)</div>
<div class='t' style='left:1151.92px;top:577.17px;font-size:14.6px;font-weight:400;-webkit-text-stroke:0.28px #4b38e3;color:#4b38e3;letter-spacing:-0.463px'>Send Message</div>
<div class='t' style='left:1151.62px;top:705.07px;font-size:14.6px;font-weight:400;-webkit-text-stroke:0.28px #4b38e3;color:#4b38e3;letter-spacing:-0.454px'>Send Message</div>
</body></html>
